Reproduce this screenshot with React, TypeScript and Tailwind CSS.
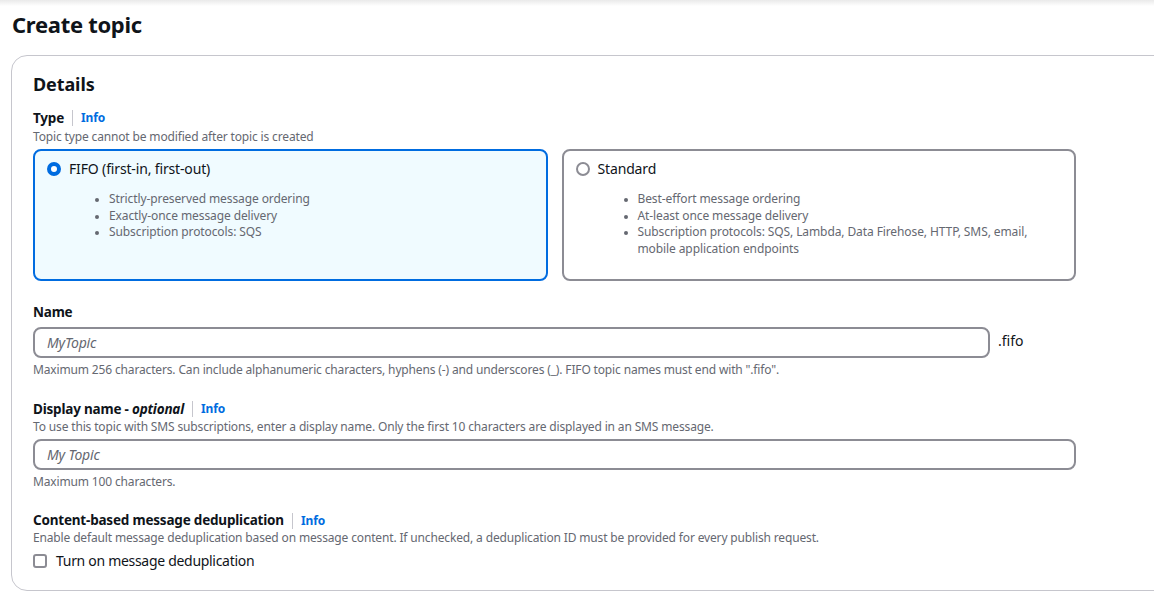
import React from 'react';

const font = { fontFamily: '"Noto Sans", "Open Sans", Arial, sans-serif' };

function InfoLink() {
  return (
    <>
      <span className="mx-[8px] inline-block h-[16px] w-px bg-[#c6c6cd] align-middle" />
      <a className="text-[12px] font-bold tracking-[-0.1px] text-[#006ce0]">Info</a>
    </>
  );
}

function Radio({ checked }: { checked: boolean }) {
  return checked ? (
    <span className="block h-[14px] w-[14px] shrink-0 rounded-full border-[4px] border-[#006ce0] bg-white" />
  ) : (
    <span className="block h-[14px] w-[14px] shrink-0 rounded-full border-2 border-[#8c8c94] bg-white" />
  );
}

interface TileProps {
  checked: boolean;
  label: string;
  items: string[];
}

function Tile({ checked, label, items }: TileProps) {
  return (
    <div
      className={
        checked
          ? 'h-[132px] flex-1 rounded-[8px] border-2 border-[#006ce0] bg-[#f0fbff] px-[12px] pt-[8px]'
          : 'h-[132px] flex-1 rounded-[8px] border-2 border-[#8c8c94] bg-white px-[12px] pt-[8px]'
      }
    >
      <div className="flex items-center gap-[8px]">
        <Radio checked={checked} />
        <span className="text-[14px] leading-[20px] tracking-[-0.15px] text-[#0f141a]">{label}</span>
      </div>
      <ul className="ml-[22px] mt-[12px] list-disc pl-[40px] text-[12px] leading-[16.5px] tracking-[-0.1px] text-[#656871] marker:text-[10px]">
        {items.map((item) => (
          <li key={item}>{item}</li>
        ))}
      </ul>
    </div>
  );
}

const label = 'flex items-center text-[13.5px] font-bold tracking-[-0.2px] text-[#0f141a]';
const desc = 'text-[12px] leading-[16px] tracking-[-0.15px] text-[#656871]';
const input =
  'flex h-[31px] items-center rounded-[8px] border-2 border-[#8c8c94] px-[12px] text-[14px] italic tracking-[-0.15px] text-[#656871]';

export default function App() {
  return (
    <div className="h-[598px] w-[1154px] overflow-hidden bg-white" style={font}>
      <div className="h-[6px] bg-linear-to-b from-[#eaeaea] to-white" />
      <h1 className="ml-[12px] mt-[3px] text-[22px] font-bold leading-[30px] tracking-[-0.3px] text-[#0f141a]">
        Create topic
      </h1>

      <div className="ml-[11px] mt-[16px] w-[1200px] rounded-[16px] border border-[#c6c6cd] px-[21px] pb-[19px] pt-[16px]">
        <div className="w-[1043px]">
          <h2 className="text-[18px] font-bold leading-[24px] tracking-[-0.1px] text-[#0f141a]">Details</h2>

          {/* Type */}
          <div className="mt-[12px]">
            <div className={`${label} leading-[20px]`}>
              Type
              <InfoLink />
            </div>
            <p className={`${desc} mt-px`}>Topic type cannot be modified after topic is created</p>
            <div className="mt-[4px] flex gap-[14px]">
              <Tile
                checked
                label="FIFO (first-in, first-out)"
                items={[
                  'Strictly-preserved message ordering',
                  'Exactly-once message delivery',
                  'Subscription protocols: SQS',
                ]}
              />
              <Tile
                checked={false}
                label="Standard"
                items={[
                  'Best-effort message ordering',
                  'At-least once message delivery',
                  'Subscription protocols: SQS, Lambda, Data Firehose, HTTP, SMS, email, mobile application endpoints',
                ]}
              />
            </div>
          </div>

          {/* Name */}
          <div className="mt-[20px]">
            <div className={`${label} leading-[22px]`}>Name</div>
            <div className="mt-[4px] flex items-center">
              <div className={`${input} w-[957px]`}>MyTopic</div>
              <span className="ml-[8px] -mt-[4px] text-[14px] text-[#0f141a]">.fifo</span>
            </div>
            <p className={`${desc} mt-[4px]`}>
              Maximum 256 characters. Can include alphanumeric characters, hyphens (-) and underscores (_). FIFO topic
              names must end with ".fifo".
            </p>
          </div>

          {/* Display name */}
          <div className="mt-[21px]">
            <div className={`${label} leading-[20px]`}>
              Display name -&nbsp;<i>optional</i>
              <InfoLink />
            </div>
            <p className={desc}>
              To use this topic with SMS subscriptions, enter a display name. Only the first 10 characters are displayed
              in an SMS message.
            </p>
            <div className={`${input} mt-[4px]`}>My Topic</div>
            <p className={`${desc} mt-[4px]`}>Maximum 100 characters.</p>
          </div>

          {/* Deduplication */}
          <div className="mt-[21px]">
            <div className={`${label} leading-[19px]`}>
              Content-based message deduplication
              <InfoLink />
            </div>
            <p className={desc}>
              Enable default message deduplication based on message content. If unchecked, a deduplication ID must be
              provided for every publish request.
            </p>
            <label className="mt-[5px] flex items-center gap-[9px]">
              <span className="block h-[14px] w-[14px] rounded-[3px] border-2 border-[#8c8c94] bg-white" />
              <span className="text-[14px] leading-[20px] tracking-[-0.3px] text-[#0f141a]">
                Turn on message deduplication
              </span>
            </label>
          </div>
        </div>
      </div>
    </div>
  );
}
